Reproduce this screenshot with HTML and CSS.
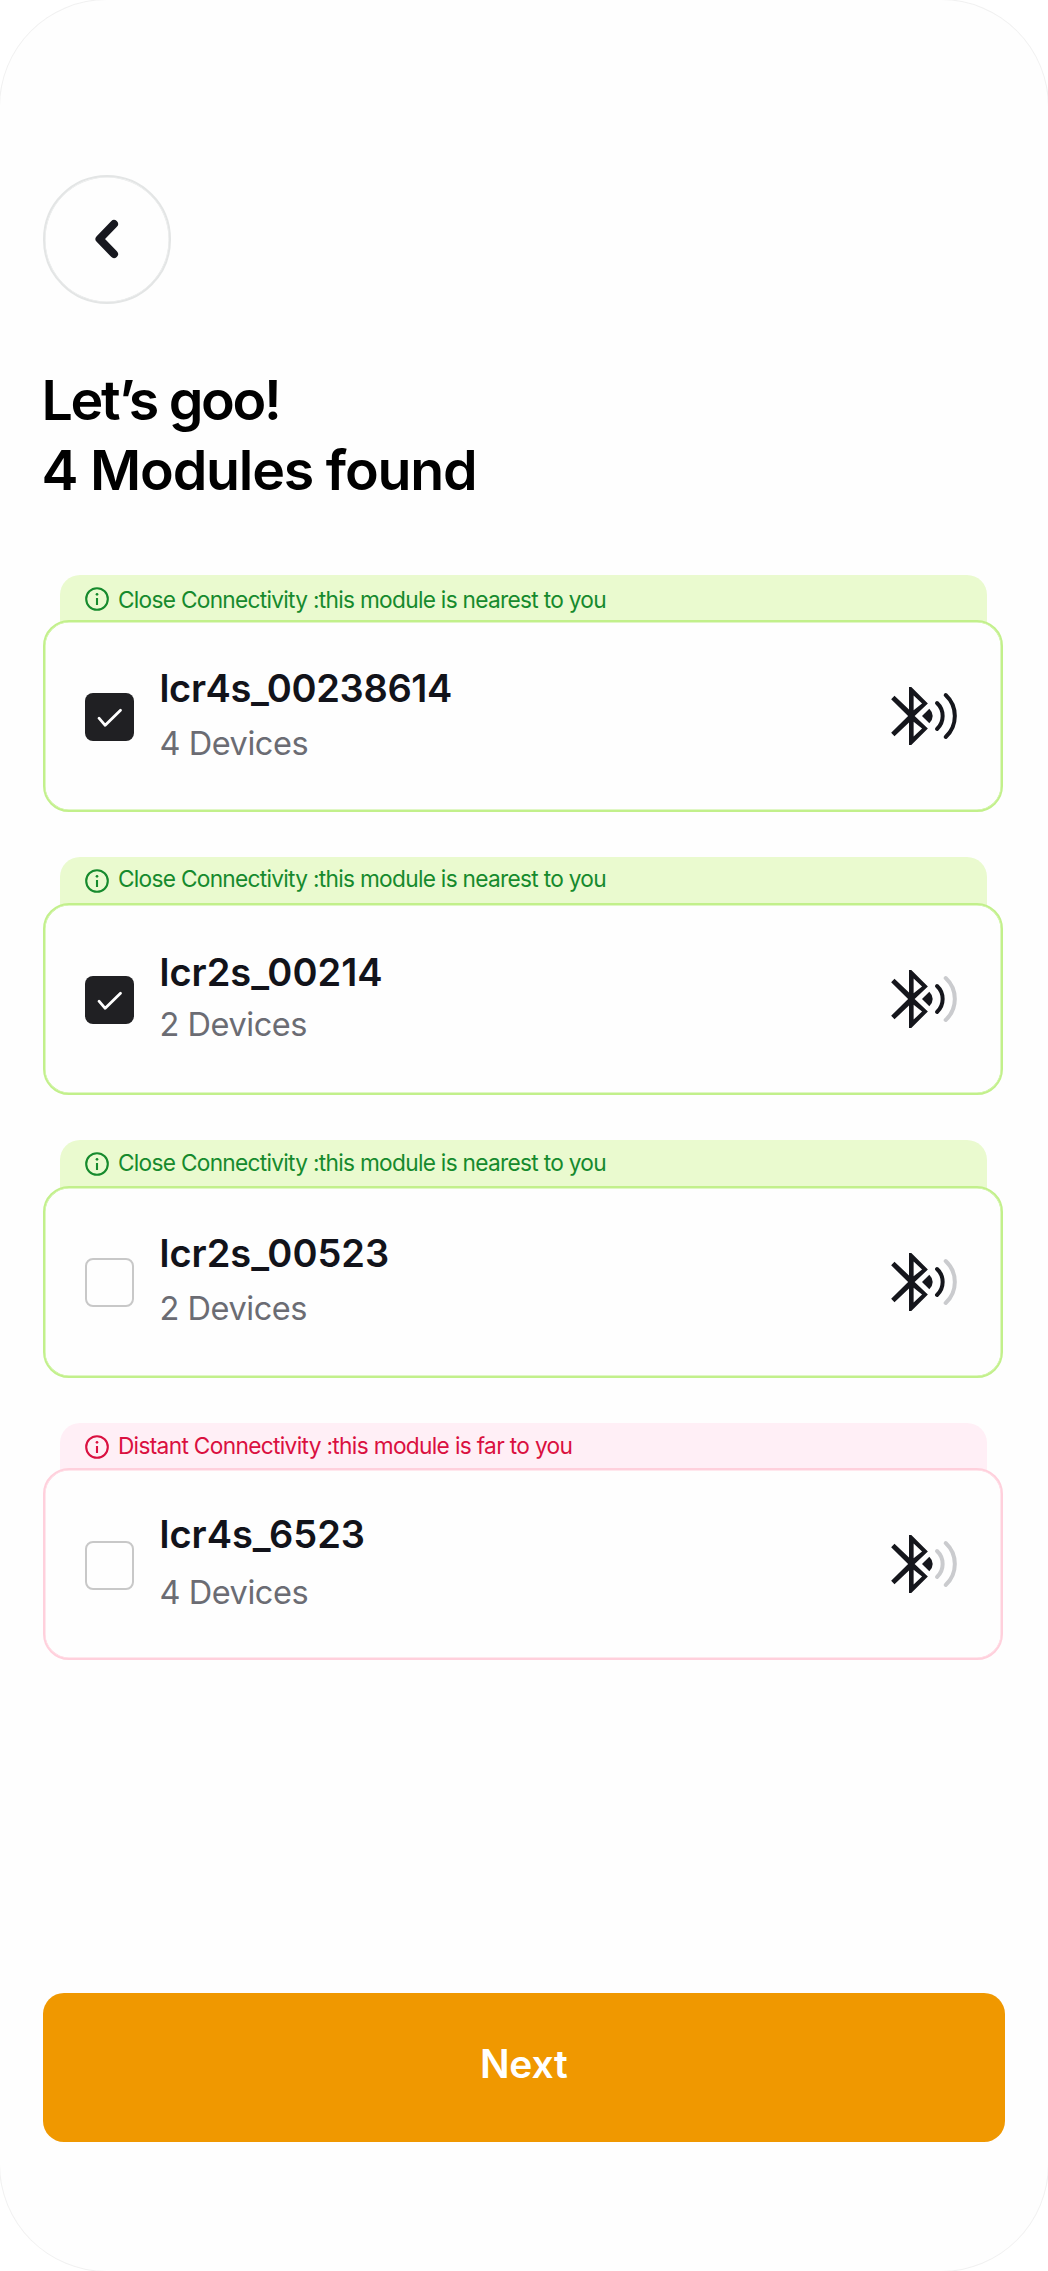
FILE: index.html
```html
<!DOCTYPE html>
<html lang="en">
<head>
<meta charset="utf-8">
<title>Modules found</title>
<link rel="stylesheet" href="styles.css">
</head>
<body>
<svg width="0" height="0" class="defs" aria-hidden="true">
  <symbol id="info" viewBox="0 0 24 24"><circle cx="12" cy="12" r="10.8" fill="none" stroke="currentColor" stroke-width="2.1"/><path d="M12 11v7" stroke="currentColor" stroke-width="2.1"/><circle cx="12" cy="7.3" r="1.35" fill="currentColor"/></symbol>
  <symbol id="bt" viewBox="120 380 200 180">
    <path fill="#15161c" fill-rule="evenodd" transform="translate(76.5 365.6) scale(8.7)" d="M17.71 7.71 12 2h-.8v7.75L6.2 5 5.050 6.250 10.900 12 5.050 17.750 6.200 19 11.200 14.250V22h.8l5.710-5.710L13.150 12zM12.800 4.900l2.900 2.800-2.900 2.300zM15.700 16.300l-2.900 2.800V14z"/>
    <path fill="#15161c" d="M213 470l22-21.500q10 10 10 21.500t-10 21.500z"/>
    <path class="near" fill="none" stroke-width="12" stroke-linecap="round" d="M258 431a53.400 53.400 0 0 1 0 78"/>
    <path class="far" fill="none" stroke-width="12" stroke-linecap="round" d="M284 407a86 86 0 0 1 0 126"/>
  </symbol>
  <symbol id="check" viewBox="0 0 48.500 48.500"><path d="M14 25.200l6.200 7.100 15.300-15.100" fill="none" stroke="#fff" stroke-width="2.800" stroke-linecap="round" stroke-linejoin="round"/></symbol>
</svg>
<main class="screen">
  <button class="back" aria-label="Back"><svg width="30" height="40" viewBox="0 0 30 40"><path d="M22 5 7.500 20 22 35" fill="none" stroke="#17181f" stroke-width="8" stroke-linecap="round" stroke-linejoin="round"/></svg></button>
  <h1 class="title"><span class="greeting">Let’s goo!</span><br><span class="count">4 Modules found</span></h1>

  <section class="modules">
    <article class="module m1">
      <div class="tab"><svg class="info"><use href="#info"/></svg><span class="note">Close Connectivity :this module is nearest to you</span></div>
      <div class="card"><span class="box on"><svg><use href="#check"/></svg></span><div class="text"><div class="name">lcr4s_00238614</div><div class="sub">4 Devices</div></div><svg class="signal s3"><use href="#bt"/></svg></div>
    </article>
    <article class="module m2">
      <div class="tab"><svg class="info"><use href="#info"/></svg><span class="note">Close Connectivity :this module is nearest to you</span></div>
      <div class="card"><span class="box on"><svg><use href="#check"/></svg></span><div class="text"><div class="name">lcr2s_00214</div><div class="sub">2 Devices</div></div><svg class="signal s2"><use href="#bt"/></svg></div>
    </article>
    <article class="module m3">
      <div class="tab"><svg class="info"><use href="#info"/></svg><span class="note">Close Connectivity :this module is nearest to you</span></div>
      <div class="card"><span class="box"></span><div class="text"><div class="name">lcr2s_00523</div><div class="sub">2 Devices</div></div><svg class="signal s2"><use href="#bt"/></svg></div>
    </article>
    <article class="module m4 distant">
      <div class="tab"><svg class="info"><use href="#info"/></svg><span class="note">Distant Connectivity :this module is far to you</span></div>
      <div class="card"><span class="box"></span><div class="text"><div class="name">lcr4s_6523</div><div class="sub">4 Devices</div></div><svg class="signal s1"><use href="#bt"/></svg></div>
    </article>
  </section>

  <button class="next">Next</button>
</main>
</body>
</html>
```
FILE: styles.css
```css
* { box-sizing: border-box; }
body { margin: 0; background: #fff; font-family: Inter, "Liberation Sans", sans-serif; }
.defs { position: absolute; }
button { font: inherit; padding: 0; }
.screen {
  display: flex;
  flex-direction: column;
  height: 2271px;
  padding: 175px 43px 0 42.5px;
  border-radius: 107px;
  background: #fefefe;
  box-shadow: 0 0 0 1px #f1f1f1;
}
.back {
  display: flex;
  align-items: center;
  justify-content: center;
  width: 128.500px;
  height: 128.500px;
  border: 2px solid #e3e5e5;
  border-radius: 50%;
  background: none;
  box-shadow: inset 0 0 0 0.500px #e3e5e5;
}
.title {
  margin: 61.500px 0 0 -1px;
  font-size: 55.500px;
  line-height: 69.500px;
  font-weight: 600;
  color: #000;
}
.greeting { letter-spacing: -2.300px; }
.count { letter-spacing: -1.200px; }
.modules {
  display: flex;
  flex-direction: column;
  gap: 45px;
  width: 960px;
  margin: 70.500px 0 0 0.500px;
}
.module { --edge: #c2f08b; --tint: #eafacf; --ink: #168a2d; }
.distant { --edge: #ffd0dc; --tint: #ffeff6; --ink: #da1040; }
.m1 { --note: 9.750px; --name: 42px; --gap: 10.500px; }
.m1 .name { letter-spacing: -0.350px; }
.m2 { --note: 6px; --name: 43.200px; --gap: 8px; }
.m3 { --note: 7px; --name: 41.500px; --gap: 11px; }
.m4 { --note: 7.750px; --name: 40px; --gap: 13.500px; }
.tab {
  display: flex;
  align-items: flex-start;
  gap: 9px;
  height: 53.700px;
  margin: 0 16.500px -8px;
  padding-left: 25.400px;
  border-radius: 20px 20px 0 0;
  background: var(--tint);
  color: var(--ink);
}
.info { width: 24px; height: 24px; margin-top: 12px; }
.note {
  padding-top: var(--note);
  font-size: 22.700px;
  line-height: 32px;
  letter-spacing: -0.710px;
  white-space: nowrap;
}
.distant .note { letter-spacing: -0.670px; }
.card {
  position: relative;
  display: flex;
  align-items: center;
  height: 192px;
  padding: 0 43px 0 40px;
  border: 2px solid var(--edge);
  border-radius: 26px;
  background: #fefefe;
  box-shadow: inset 0 0 0 0.500px var(--edge);
}
.box {
  width: 48.500px;
  height: 48.500px;
  margin-top: 2px;
  border: 2px solid #c8c8c8;
  border-radius: 8px;
}
.box.on { border: 0; background: #202023; }
.box svg { display: block; width: 100%; height: 100%; }
.text {
  flex: 1;
  align-self: flex-start;
  padding: var(--name) 0 0 26px;
}
.name { font-size: 38px; line-height: 48px; font-weight: 600; color: #12131a; }
.sub { margin-top: var(--gap); font-size: 32.500px; line-height: 42px; letter-spacing: -0.450px; color: #6b6c73; }
.signal { width: 66.700px; height: 60px; --on: #15161c; --off: #cacbce; }
.near { stroke: var(--near); }
.far { stroke: var(--far); }
.s3 { --near: var(--on); --far: var(--on); }
.s2 { --near: var(--on); --far: var(--off); }
.s1 { --near: var(--off); --far: var(--off); }
.next {
  flex: none;
  height: 149.700px;
  margin-top: 332.500px;
  padding-bottom: 9px;
  border: 0;
  border-radius: 21px;
  background: #f09800;
  color: #fff;
  font-size: 39px;
  font-weight: 600;
  letter-spacing: -0.200px;
}
```
